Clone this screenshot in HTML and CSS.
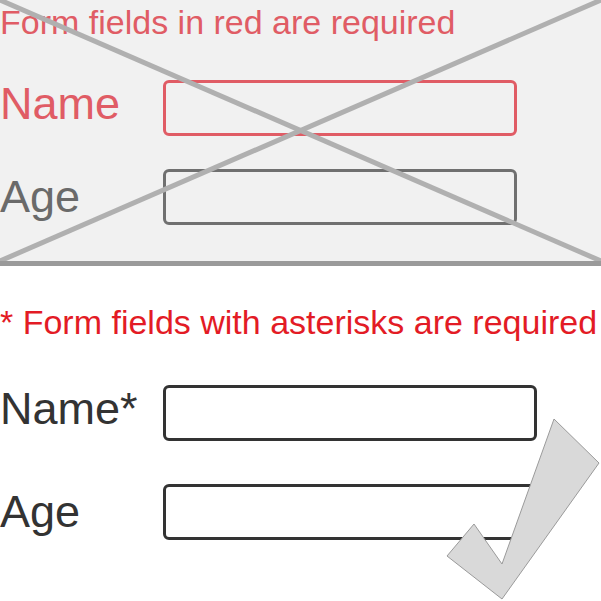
FILE: index.html
```html
<html>
    <head>
	<title>Required fields</title>
		<link rel="stylesheet" href="styles.css">
	    </head>
	<body>
	    <div id="wrong" class="panel">
		<p class="note noteWrong">Form fields in red are required</p>
		<div class="row rowFirst">
		    <span class="label red lift">Name</span>
		    <div class="field redField"></div>
		</div>
		<div class="row rowSecond">
		    <span class="label grey">Age</span>
		    <div class="field greyField"></div>
		</div>
		<svg class="cross" viewBox="0 0 601 261" preserveAspectRatio="none">
		    <line x1="0" y1="0" x2="601" y2="261"></line>
		    <line x1="601" y1="0" x2="0" y2="261"></line>
		</svg>
	    </div>
	    <div id="right" class="panel">
		<p class="note noteRight">* Form fields with asterisks are required</p>
		<div class="row rowThird">
		    <span class="label dark lift">Name*</span>
		    <div class="field darkField wide"></div>
		</div>
		<div class="row rowFourth">
		    <span class="label dark">Age</span>
		    <div class="field darkField wide"></div>
		</div>
		<svg class="tick" viewBox="0 0 601 601">
		    <polygon points="554,419 599,463 502,599 447,556 474,524 502,564"></polygon>
		</svg>
	    </div>
	</body>
</html>
```
FILE: styles.css
```css
html, body{
	margin:0;
	padding:0;
	overflow:hidden;
}

body{
	width:601px;
	height:601px;
	background-color:#ffffff;
	font-family:"Liberation Sans", Arial, sans-serif;
}

.panel{
	display:flex;
	flex-direction:column;
}

#wrong{
	position:relative;
	height:261px;
	background-color:#f1f1f1;
	border-bottom:5px solid #9a9a9a;
}

#right{
	height:335px;
}

.note{
	margin:0;
	font-size:34px;
	line-height:40px;
	white-space:nowrap;
}

.noteWrong{
	padding-top:2px;
	color:#e05c65;
}

.noteRight{
	margin-top:36px;
	color:#e31b25;
}

.row{
	display:flex;
	align-items:flex-start;
	height:56px;
}

.rowFirst{ margin-top:38px; }
.rowSecond{ margin-top:33px; }
.rowThird{ margin-top:43px; }
.rowFourth{ margin-top:43px; }

.label{
	width:163px;
	font-size:45px;
	line-height:56px;
}

.lift{
	margin-top:-4px;
}

.red{ color:#e05c65; }
.grey{ color:#6a6a6a; }
.dark{ color:#333333; }

.field{
	box-sizing:border-box;
	width:354px;
	height:56px;
	border-radius:6px;
	border:3px solid #707070;
}

.wide{
	width:374px;
}

.redField{ border-color:#e05c65; }
.greyField{ border-color:#707070; }
.darkField{ border-color:#333333; }

.cross{
	position:absolute;
	left:0;
	top:0;
	width:601px;
	height:261px;
}

.cross line{
	stroke:#b0b0b0;
	stroke-width:5;
}

.tick{
	position:absolute;
	left:0;
	top:0;
	width:601px;
	height:601px;
}

.tick polygon{
	fill:#d9d9d9;
	stroke:#9a9a9a;
	stroke-width:1;
}
```
